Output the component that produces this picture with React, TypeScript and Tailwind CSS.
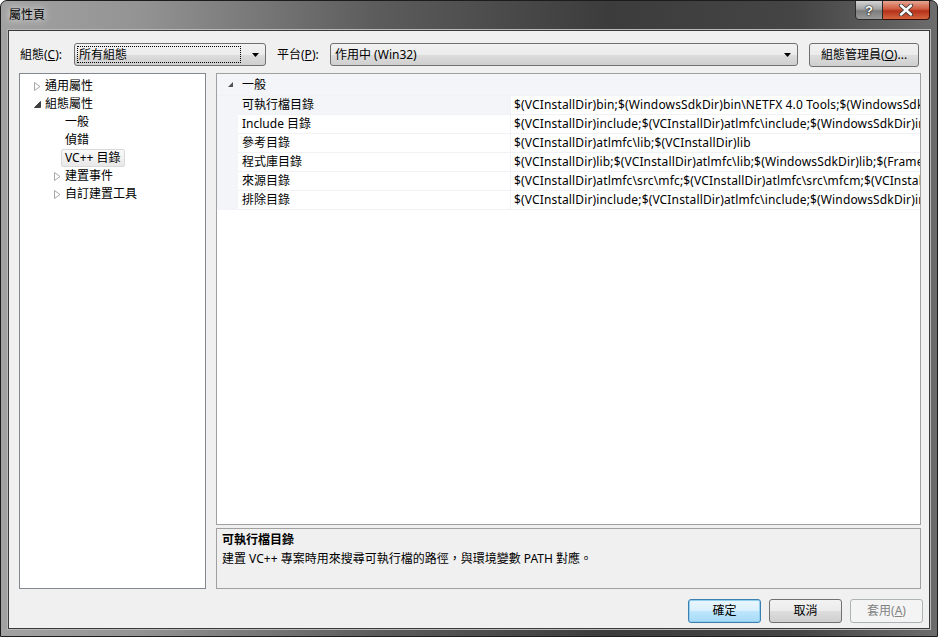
const FONT = "font-['Noto_Sans','Noto_Sans_CJK_TC',sans-serif]";

const Collapsed = () => (
  <svg width="7" height="9" viewBox="0 0 7 9" className="shrink-0">
    <path d="M0.5 0.5 L6 4.5 L0.5 8.5 Z" fill="white" stroke="#a6a6a6" />
  </svg>
);

const Expanded = () => (
  <svg width="7" height="7" viewBox="0 0 7 7" className="shrink-0">
    <path d="M6.5 0.5 L6.5 6.5 L0.5 6.5 Z" fill="#404040" stroke="#404040" />
  </svg>
);

const DropArrow = () => (
  <svg width="7" height="4" viewBox="0 0 7 4">
    <path d="M0 0 H7 L3.5 4 Z" fill="#000" />
  </svg>
);

const TitleBar = () => (
  <div className="flex h-[29px] px-[7px] shrink-0">
    <div className="self-center text-[12px] leading-[14px] text-black [text-shadow:0_0_6px_#e0e0e0,0_0_10px_#d0d0d0] ml-[1px] -mt-[1px]">
      屬性頁
    </div>
    <div className="flex-1" />
    <div className="flex self-start -mt-[1px]">
      <div className="w-[28px] h-[20px] border border-[#2a2a2a] rounded-bl-[4px] bg-[linear-gradient(to_bottom,#d4d4d4,#a3a3a3_45%,#7c7c7c_55%,#9a9a9a)] flex items-center justify-center">
        <span className="text-white font-bold text-[13px] leading-none [text-shadow:0_0_1px_#000,0_0_2px_#000] font-['Liberation_Sans',sans-serif]">?</span>
      </div>
      <div className="w-[47px] h-[20px] border border-l-0 border-[#3a0c05] rounded-br-[4px] bg-[linear-gradient(to_bottom,#e6a593,#cf5a3d_45%,#b5301a_55%,#d4663f)] flex items-center justify-center">
        <svg width="16" height="12" viewBox="0 0 16 12">
          <path d="M3 1.5 L13 10.5 M13 1.5 L3 10.5" stroke="#3b3b3b" strokeWidth="4.2" strokeLinecap="round" />
          <path d="M3 1.5 L13 10.5 M13 1.5 L3 10.5" stroke="#fff" strokeWidth="2.4" strokeLinecap="round" />
        </svg>
      </div>
    </div>
  </div>
);

const Combo = ({ w, text, focus }: { w: string; text: string; focus?: boolean }) => (
  <div className={`${w} shrink-0 h-[23px] border border-[#707070] rounded-[3px] bg-[linear-gradient(to_bottom,#f2f2f2,#ebebeb_50%,#dddddd_50%,#cfcfcf)] flex items-center pl-[2px] pr-[6px]`}>
    <div className={`flex-1 h-[17px] flex items-center pl-[1px] ${focus ? "border border-dotted border-black" : "border border-transparent"}`}>
      <span className="text-[12px] leading-[14px]">{text}</span>
    </div>
    <div className="w-[18px] flex justify-end">
      <DropArrow />
    </div>
  </div>
);

const Btn = ({ children, kind }: { children: React.ReactNode; kind?: "default" | "disabled" }) => {
  const style =
    kind === "default"
      ? "border-[#3c7fb1] bg-[linear-gradient(to_bottom,#eaf6fd,#d9f0fc_50%,#bee6fd_50%,#a7d9f5)] text-black shadow-[inset_0_0_0_1px_#8fd0f0]"
      : kind === "disabled"
      ? "border-[#adb2b5] bg-[#f4f4f4] text-[#838383]"
      : "border-[#707070] bg-[linear-gradient(to_bottom,#f2f2f2,#ebebeb_50%,#dddddd_50%,#cfcfcf)] text-black";
  return (
    <div className={`w-[73px] h-[24px] shrink-0 border rounded-[3px] flex items-center justify-center text-[12px] leading-[14px] ${style}`}>
      {children}
    </div>
  );
};

const treeRows: { text: string; level: number; icon?: "c" | "e"; sel?: boolean }[] = [
  { text: "通用屬性", level: 0, icon: "c" },
  { text: "組態屬性", level: 0, icon: "e" },
  { text: "一般", level: 1 },
  { text: "偵錯", level: 1 },
  { text: "VC++ 目錄", level: 1, sel: true },
  { text: "建置事件", level: 1, icon: "c" },
  { text: "自訂建置工具", level: 1, icon: "c" },
];

const props: [string, string][] = [
  ["可執行檔目錄", "$(VCInstallDir)bin;$(WindowsSdkDir)bin\\NETFX 4.0 Tools;$(WindowsSdkDir)bin;$(VSInstallDir)Common7\\Tools\\bin;$(VSInstallDir)Common7\\tools"],
  ["Include 目錄", "$(VCInstallDir)include;$(VCInstallDir)atlmfc\\include;$(WindowsSdkDir)include;$(FrameworkSDKDir)\\include;"],
  ["參考目錄", "$(VCInstallDir)atlmfc\\lib;$(VCInstallDir)lib"],
  ["程式庫目錄", "$(VCInstallDir)lib;$(VCInstallDir)atlmfc\\lib;$(WindowsSdkDir)lib;$(FrameworkSDKDir)\\lib"],
  ["來源目錄", "$(VCInstallDir)atlmfc\\src\\mfc;$(VCInstallDir)atlmfc\\src\\mfcm;$(VCInstallDir)atlmfc\\src\\atl;$(VCInstallDir)crt\\src;"],
  ["排除目錄", "$(VCInstallDir)include;$(VCInstallDir)atlmfc\\include;$(WindowsSdkDir)include;$(FrameworkSDKDir)\\include;"],
];

export default function App() {
  return (
    <div className={`w-[938px] h-[637px] ${FONT} text-black`}>
      <div className="w-full h-full border border-[#1c1c1c] rounded-t-[7px] bg-[linear-gradient(to_right,#a2a2a2,#939393_15%,#5c5c5c_40%,#3c3c3c_65%,#454545_85%,#6c6c6c)] flex flex-col overflow-hidden">
        <TitleBar />
        <div className="mx-[7px] mb-[7px] flex-1 min-w-0 border border-[#3a3a3a] bg-[#f0f0f0] flex flex-col shadow-[0_0_0_1px_#b8b8b8]">
          {/* top row */}
          <div className="flex items-center h-[23px] mt-[12px]">
            <span className="w-[65px] shrink-0 pl-[11px] text-[12px] leading-[14px]">
              組態(<u>C</u>):
            </span>
            <Combo w="w-[192px]" text="所有組態" focus />
            <span className="w-[64px] shrink-0 pl-[11px] text-[12px] leading-[14px]">
              平台(<u>P</u>):
            </span>
            <Combo w="w-[468px]" text="作用中 (Win32)" />
            <div className="ml-[11px] w-[110px] shrink-0 h-[24px] border border-[#707070] rounded-[3px] bg-[linear-gradient(to_bottom,#f2f2f2,#ebebeb_50%,#dddddd_50%,#cfcfcf)] flex items-center justify-center text-[12px] leading-[14px]">
              組態管理員(<u>O</u>)...
            </div>
          </div>

          {/* main area */}
          <div className="flex h-[516px] mt-[7px] pl-[10px] gap-[10px]">
            {/* tree */}
            <div className="w-[187px] shrink-0 border border-[#828790] bg-white pt-[3px]">
              {treeRows.map((r) => (
                <div key={r.text} className="flex items-center h-[18px]">
                  <div className={`${r.level === 0 ? "w-[25px]" : "w-[45px]"} flex justify-end pr-[4px] shrink-0`}>
                    {r.icon === "c" && <Collapsed />}
                    {r.icon === "e" && <Expanded />}
                  </div>
                  {r.sel ? (
                    <span className="-ml-[4px] h-[18px] px-[3px] flex items-center border border-[#d9d9d9] rounded-[2px] bg-[linear-gradient(to_bottom,#fafafa,#e8e8e8)] text-[12px] leading-[14px] whitespace-nowrap">
                      {r.text}
                    </span>
                  ) : (
                    <span className="text-[12px] leading-[14px] whitespace-nowrap">{r.text}</span>
                  )}
                </div>
              ))}
            </div>

            {/* property grid + description */}
            <div className="w-[705px] shrink-0 min-w-0 flex flex-col gap-[3px]">
              <div className="h-[452px] border border-[#a0a0a0] bg-white overflow-hidden">
                <div className="flex items-center h-[22px] bg-[#f3f5f8] border-b border-[#f0f2f6]">
                  <div className="w-[21px] flex justify-end pr-[5px]">
                    <svg width="5" height="5" viewBox="0 0 5 5">
                      <path d="M5 0 V5 H0 Z" fill="#505050" />
                    </svg>
                  </div>
                  <span className="pl-[4px] text-[12px] leading-[14px]">一般</span>
                </div>
                {props.map(([name, value], i) => (
                  <div key={name} className="flex h-[19px]">
                    <div className="w-[21px] bg-[#f3f5f8] shrink-0" />
                    <div className={`w-[273px] shrink-0 flex items-center pl-[4px] border-b border-r border-[#f0f2f6] ${i === 0 ? "bg-[#f3f5f8]" : "bg-white"}`}>
                      <span className="text-[12px] leading-[14px] whitespace-nowrap">{name}</span>
                    </div>
                    <div className="flex-1 min-w-0 flex items-center pl-[3px] border-b border-[#f0f2f6] bg-white overflow-hidden">
                      <span className="text-[12px] leading-[14px] tracking-[0.15px] whitespace-nowrap">{value}</span>
                    </div>
                  </div>
                ))}
              </div>
              <div className="flex-1 border border-[#a0a0a0] bg-[#f0f0f0] px-[5px] pt-[4px]">
                <div className="text-[12px] leading-[14px] font-bold">可執行檔目錄</div>
                <div className="mt-[5px] text-[12px] leading-[14px]">
                  建置 VC++ 專案時用來搜尋可執行檔的路徑，與環境變數 PATH 對應。
                </div>
              </div>
            </div>
          </div>

          {/* buttons */}
          <div className="flex justify-end gap-[8px] mt-[10px] pr-[6px]">
            <Btn kind="default">確定</Btn>
            <Btn>取消</Btn>
            <Btn kind="disabled">
              套用(<u>A</u>)
            </Btn>
          </div>
        </div>
      </div>
    </div>
  );
}
